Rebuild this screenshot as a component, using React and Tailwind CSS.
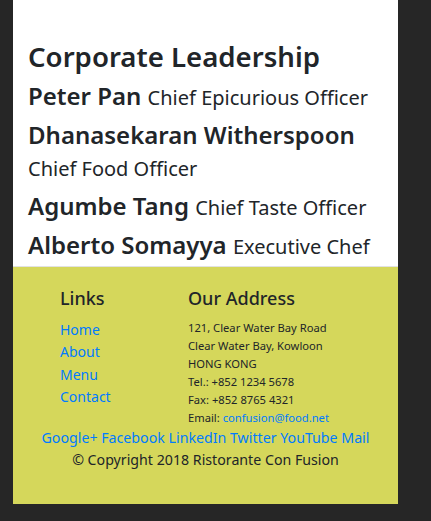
const people = [
  { name: 'Peter Pan', title: 'Chief Epicurious Officer' },
  { name: 'Dhanasekaran Witherspoon', title: 'Chief Food Officer' },
  { name: 'Agumbe Tang', title: 'Chief Taste Officer' },
  { name: 'Alberto Somayya', title: 'Executive Chef' },
];

const links = ['Home', 'About', 'Menu', 'Contact'];
const socials = ['Google+', 'Facebook', 'LinkedIn', 'Twitter', 'YouTube', 'Mail'];

export default function App() {
  return (
    <div className="min-h-screen bg-[#262626] font-['Noto_Sans',sans-serif] text-[#212529]">
      <div className="ml-[13px] w-[385px] bg-white">
        <div className="px-[15px] pt-[40px]">
          <h2 className="text-[27.6px] font-semibold leading-[1.2] mb-[7px]">Corporate Leadership</h2>
          {people.map((p) => (
            <h4 key={p.name} className="text-[24px] font-semibold leading-[32px] mb-[7px] last:mb-[5px]">
              {p.name} <small className="text-[20px] font-normal leading-none">{p.title}</small>
            </h4>
          ))}
        </div>

        <footer className="bg-[#d5d75b] border-t border-[#e2e2e2] pt-[20px] pb-[34px]">
          <div className="flex pl-[47px]">
            <div className="w-[128px]">
              <h5 className="text-[18px] font-medium leading-[1.3] mb-[8px]">Links</h5>
              <ul className="text-[14px] leading-[22.5px]">
                {links.map((l) => (
                  <li key={l}>
                    <a href="#" className="text-[#007bff]">{l}</a>
                  </li>
                ))}
              </ul>
            </div>
            <div>
              <h5 className="text-[18px] font-medium leading-[1.3] mb-[8px]">Our Address</h5>
              <address className="not-italic text-[11.2px] leading-[18px]">
                121, Clear Water Bay Road<br />
                Clear Water Bay, Kowloon<br />
                HONG KONG<br />
                Tel.: +852 1234 5678<br />
                Fax: +852 8765 4321<br />
                Email: <a href="#" className="text-[#007bff]">confusion@food.net</a>
              </address>
            </div>
          </div>
          <div className="text-center text-[14.2px] leading-[21px]">
            <div className="text-[#007bff] leading-[22px]">
              {socials.map((s, i) => (
                <span key={s}>
                  <a href="#">{s}</a>
                  {i < socials.length - 1 ? ' ' : ''}
                </span>
              ))}
            </div>
            <p>© Copyright 2018 Ristorante Con Fusion</p>
          </div>
        </footer>
      </div>
    </div>
  );
}
